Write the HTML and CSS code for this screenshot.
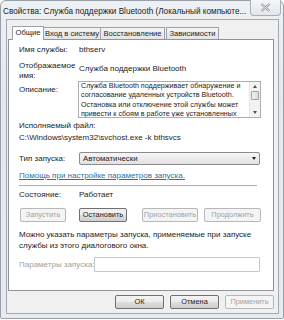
FILE: index.html
```html
<!DOCTYPE html>
<html lang="ru">
<head>
<meta charset="utf-8">
<link rel="stylesheet" href="styles.css">
</head>
<body>
<div class="window">
  <div class="titlebar">
    <span class="title">Свойства: Служба поддержки Bluetooth (Локальный компьюте...</span>
    <span class="close"><svg width="11" height="9" viewBox="0 0 11 9"><path d="M1.5 1 L9.5 8 M9.5 1 L1.5 8" stroke="#8a9098" stroke-width="2.2" fill="none"/><path d="M1.5 1 L9.5 8 M9.5 1 L1.5 8" stroke="#f4f6f8" stroke-width="0.9" fill="none"/></svg></span>
  </div>
  <div class="client">
    <div class="tabs">
      <span class="tab active">Общие</span>
      <span class="tab t2">Вход в систему</span>
      <span class="tab t3">Восстановление</span>
      <span class="tab t4">Зависимости</span>
    </div>
    <div class="panel">
      <div class="row r1"><span class="lbl">Имя службы:</span><span class="val">bthserv</span></div>
      <div class="row r2"><span class="lbl">Отображаемое<br>имя:</span><span class="val v2">Служба поддержки Bluetooth</span></div>
      <div class="row r3"><span class="lbl l3">Описание:</span>
        <div class="desc">
          <div class="desc-text">Служба Bluetooth поддерживает обнаружение и<br>согласование удаленных устройств Bluetooth.<br>Остановка или отключение этой службы может<br>привести к сбоям в работе уже установленных</div>
          <div class="sb"><span class="arr up"></span><span class="thumb"></span><span class="arr down"></span></div>
        </div>
      </div>
      <div class="line exe">Исполняемый файл:</div>
      <div class="line path">C:\Windows\system32\svchost.exe -k bthsvcs</div>
      <div class="row r4"><span class="lbl">Тип запуска:</span>
        <div class="select"><span>Автоматически</span><span class="caret"></span></div>
      </div>
      <div class="line link">Помощь при настройке параметров запуска.</div>
      <div class="sep"></div>
      <div class="row r5"><span class="lbl">Состояние:</span><span class="val">Работает</span></div>
      <div class="btns">
        <span class="btn dis b1">Запустить</span>
        <span class="btn b2">Остановить</span>
        <span class="btn dis b3">Приостановить</span>
        <span class="btn dis b4">Продолжить</span>
      </div>
      <div class="note">Можно указать параметры запуска, применяемые при запуске<br>службы из этого диалогового окна.</div>
      <div class="row r6"><span class="lbl dis-t">Параметры запуска:</span><span class="input"></span></div>
    </div>
    <div class="footer">
      <span class="btn fb">ОК</span>
      <span class="btn fb">Отмена</span>
      <span class="btn fb dis">Применить</span>
    </div>
  </div>
</div>
</body>
</html>
```
FILE: styles.css
```css
html, body {
  margin: 0;
  padding: 0;
  background: #ffffff;
}
body {
  width: 284px;
  height: 320px;
  overflow: hidden;
  font-family: "Liberation Sans", Arial, sans-serif;
  font-size: 8px;
  color: #1c1c1c;
}
.window {
  box-sizing: border-box;
  width: 284px;
  height: 319px;
  border: 1px solid #9aa0a8;
  border-radius: 6px 6px 2px 2px;
  background: linear-gradient(#eef1f4, #e4e8ec 30%, #e8ebee);
  display: flex;
  flex-direction: column;
  padding: 0 4px 4px 5px;
}
.titlebar {
  height: 18px;
  display: flex;
  align-items: center;
  position: relative;
}
.title {
  font-size: 8.2px;
  color: #202020;
  margin-left: -3px;
  margin-top: 2px;
  white-space: nowrap;
}
.close {
  position: absolute;
  right: -2px;
  top: -1px;
  width: 31px;
  height: 16px;
  box-sizing: border-box;
  border: 1px solid #a8aeb6;
  border-top: none;
  border-radius: 0 0 4px 4px;
  background: linear-gradient(#f4f6f8, #e2e6ea);
  display: flex;
  align-items: center;
  justify-content: center;
}
.client {
  flex: 1;
  box-sizing: border-box;
  border: 1px solid #a3a9b0;
  background: #f0f0f0;
  padding: 6px 4px 0 1px;
  display: flex;
  flex-direction: column;
}
.tabs {
  display: flex;
  height: 13px;
  padding-left: 4px;
  align-items: flex-end;
  position: relative;
  z-index: 1;
}
.tab {
  box-sizing: border-box;
  height: 12px;
  border: 1px solid #9da2aa;
  border-bottom: none;
  background: linear-gradient(#f4f4f4, #e4e4e4);
  font-size: 7.6px;
  line-height: 11px;
  text-align: center;
  margin-left: -1px;
  white-space: nowrap;
}
.tab.active {
  height: 14px;
  margin-bottom: -1px;
  background: #ffffff;
  width: 32px;
  margin-left: 0;
}
.t2 { width: 58px; }
.t3 { width: 65px; }
.t4 { width: 53px; margin-left: 1px; }
.panel {
  box-sizing: border-box;
  height: 252px;
  border: 1px solid #8f949c;
  background: #ffffff;
  padding: 5px 0 0 10px;
  position: relative;
}
.row {
  display: flex;
  align-items: flex-start;
  line-height: 10px;
}
.lbl {
  width: 60px;
  flex: none;
  color: #1c1c1c;
  white-space: nowrap;
}
.val { white-space: nowrap; }
.r2 { margin-top: 6px; }
.v2 { margin-top: 3px; }
.l3 { margin-top: 4px; }
.desc {
  box-sizing: border-box;
  width: 183px;
  height: 37px;
  margin-left: -1px;
  border: 1px solid #abadb3;
  display: flex;
}
.desc-text {
  flex: 1;
  font-size: 7.15px;
  line-height: 9.3px;
  padding: 0 0 0 2px;
  overflow: hidden;
  white-space: nowrap;
}
.sb {
  width: 10px;
  flex: none;
  display: flex;
  flex-direction: column;
  background: #f2f2f2;
  border-left: 1px solid #e6e6e6;
}
.arr {
  height: 9px;
  position: relative;
}
.arr::after {
  content: "";
  position: absolute;
  left: 3px;
  top: 3px;
  border-left: 2px solid transparent;
  border-right: 2px solid transparent;
}
.up::after { border-bottom: 3px solid #505050; }
.down::after { border-top: 3px solid #505050; }
.thumb {
  flex: 1;
  margin: 0 1px;
  border: 1px solid #a0a4aa;
  border-radius: 1px;
  background: linear-gradient(90deg, #f2f2f2, #dcdcdc);
  max-height: 9px;
  box-sizing: border-box;
}
.sb .down { margin-top: auto; }
.line { line-height: 10px; white-space: nowrap; }
.exe { margin-top: 3px; }
.path { margin-top: 2px; }
.r4 { margin-top: 9px; align-items: center; }
.select {
  box-sizing: border-box;
  width: 181px;
  height: 13px;
  border: 1px solid #8c8c8c;
  border-radius: 2px;
  background: linear-gradient(#f6f6f6, #e2e2e2);
  display: flex;
  align-items: center;
  justify-content: space-between;
  padding: 0 3px 0 3px;
  font-size: 7.8px;
}
.caret {
  width: 0;
  height: 0;
  border-left: 2.5px solid transparent;
  border-right: 2.5px solid transparent;
  border-top: 3px solid #202020;
}
.link {
  margin-top: 6px;
  color: #2a6f9e;
  text-decoration: underline;
}
.sep {
  margin-top: 4px;
  width: 238px;
  height: 1px;
  background: #a9aeb4;
}
.r5 { margin-top: 4px; }
.btns {
  margin-top: 8px;
  display: flex;
  height: 14px;
}
.btn {
  box-sizing: border-box;
  height: 14px;
  border: 1px solid #707070;
  border-radius: 2px;
  background: linear-gradient(#f3f3f3 0%, #ebebeb 50%, #dddddd 51%, #cfcfcf 100%);
  font-size: 7.4px;
  line-height: 12px;
  text-align: center;
  white-space: nowrap;
  color: #1c1c1c;
}
.btn.dis {
  border-color: #b4b8bc;
  background: #f4f4f4;
  color: #a2a2a2;
}
.b1 { width: 46px; margin-left: 1px; }
.b2 { width: 48px; margin-left: 13px; }
.b3 { width: 56px; margin-left: 15px; }
.b4 { width: 57px; margin-left: 6px; }
.note {
  margin-top: 7px;
  line-height: 11px;
  white-space: nowrap;
}
.r6 { margin-top: 6px; align-items: center; }
.dis-t { color: #a0a0a0; width: 75px; }
.input {
  box-sizing: border-box;
  width: 166px;
  height: 15px;
  border: 1px solid #c4c8cc;
  border-radius: 1px;
}
.footer {
  display: flex;
  justify-content: flex-end;
  gap: 6px;
  margin-top: 4px;
  padding-right: 0;
}
.fb { width: 49px; }
```
